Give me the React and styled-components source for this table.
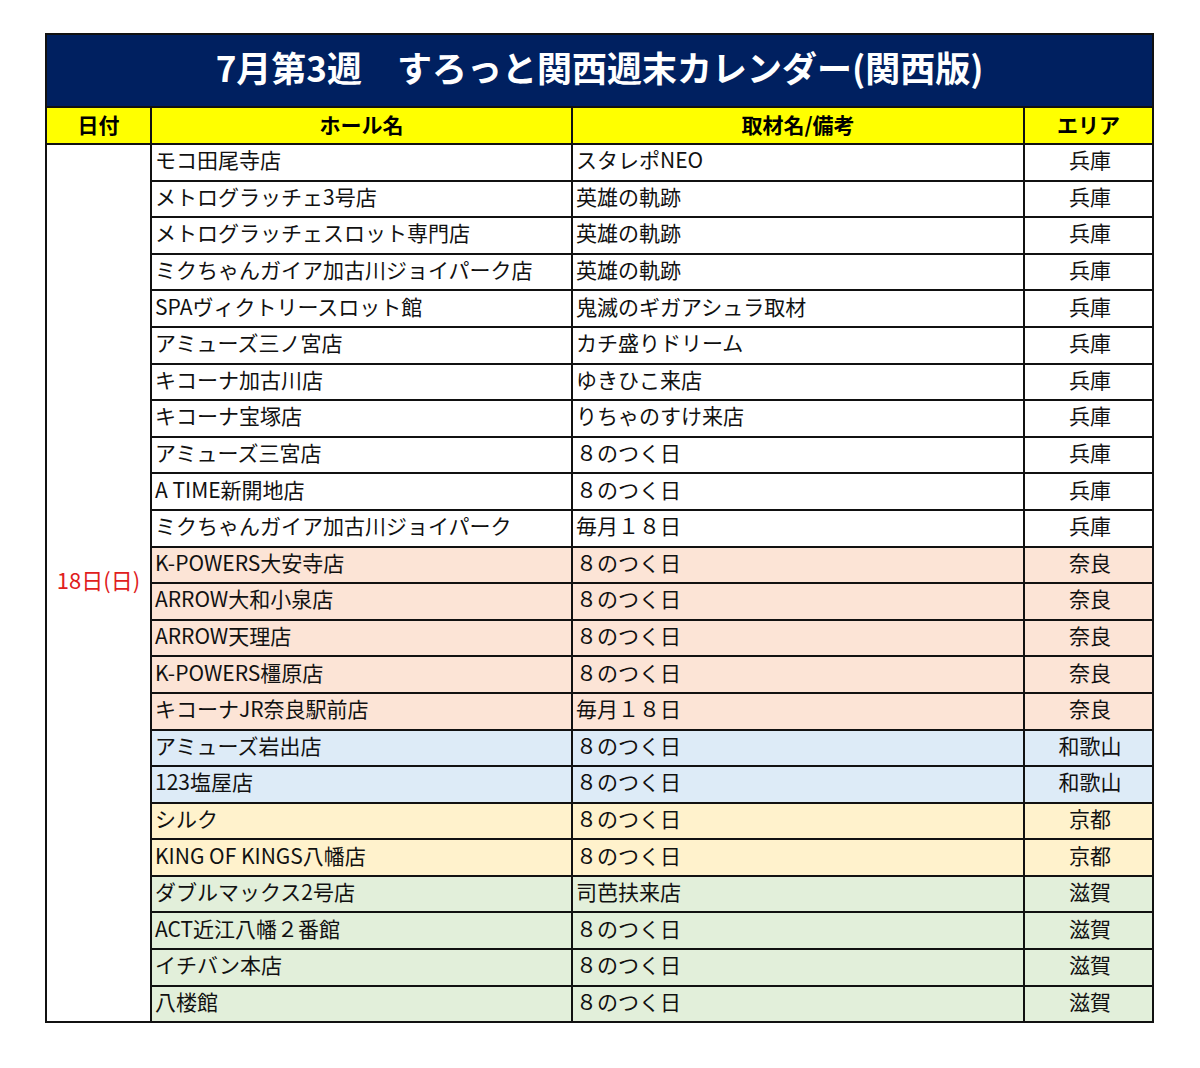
import React from 'react';
import styled, { createGlobalStyle } from 'styled-components';

const GlobalStyle = createGlobalStyle`
    body {
        margin: 0;
        background: #ffffff;
        font-family: "Noto Sans CJK JP", "Noto Sans", sans-serif;
    }
`;

const regionColors = {
    hyogo: '#ffffff',
    nara: '#fce4d6',
    wakayama: '#ddebf7',
    kyoto: '#fff2cc',
    shiga: '#e2efda',
};

const rows = [
    ['モコ田尾寺店', 'スタレポNEO', '兵庫', 'hyogo'],
    ['メトログラッチェ3号店', '英雄の軌跡', '兵庫', 'hyogo'],
    ['メトログラッチェスロット専門店', '英雄の軌跡', '兵庫', 'hyogo'],
    ['ミクちゃんガイア加古川ジョイパーク店', '英雄の軌跡', '兵庫', 'hyogo'],
    ['SPAヴィクトリースロット館', '鬼滅のギガアシュラ取材', '兵庫', 'hyogo'],
    ['アミューズ三ノ宮店', 'カチ盛りドリーム', '兵庫', 'hyogo'],
    ['キコーナ加古川店', 'ゆきひこ来店', '兵庫', 'hyogo'],
    ['キコーナ宝塚店', 'りちゃのすけ来店', '兵庫', 'hyogo'],
    ['アミューズ三宮店', '８のつく日', '兵庫', 'hyogo'],
    ['A TIME新開地店', '８のつく日', '兵庫', 'hyogo'],
    ['ミクちゃんガイア加古川ジョイパーク', '毎月１８日', '兵庫', 'hyogo'],
    ['K-POWERS大安寺店', '８のつく日', '奈良', 'nara'],
    ['ARROW大和小泉店', '８のつく日', '奈良', 'nara'],
    ['ARROW天理店', '８のつく日', '奈良', 'nara'],
    ['K-POWERS橿原店', '８のつく日', '奈良', 'nara'],
    ['キコーナJR奈良駅前店', '毎月１８日', '奈良', 'nara'],
    ['アミューズ岩出店', '８のつく日', '和歌山', 'wakayama'],
    ['123塩屋店', '８のつく日', '和歌山', 'wakayama'],
    ['シルク', '８のつく日', '京都', 'kyoto'],
    ['KING OF KINGS八幡店', '８のつく日', '京都', 'kyoto'],
    ['ダブルマックス2号店', '司芭扶来店', '滋賀', 'shiga'],
    ['ACT近江八幡２番館', '８のつく日', '滋賀', 'shiga'],
    ['イチバン本店', '８のつく日', '滋賀', 'shiga'],
    ['八楼館', '８のつく日', '滋賀', 'shiga'],
];

const Styled = {
    Page: styled.div`
        padding: 33px 0 0 45px;
        width: 1200px;
        height: 1068px;
        box-sizing: border-box;
        overflow: hidden;
    `,

    Table: styled.table`
        width: 1107px;
        border-collapse: collapse;
        table-layout: fixed;
        border: 2px solid #111;
    `,

    Row: styled.tr`
        height: ${({ h }) => h}px;
    `,

    TitleCell: styled.th`
        padding: 0 0 8px;
        background-color: #002060;
        color: #ffffff;
        font-size: 35px;
        line-height: 40px;
        font-weight: 700;
        text-align: center;
        border: 2px solid #111;
        white-space: pre;
    `,

    HeadCell: styled.th`
        padding: 0 0 4px;
        background-color: #ffff00;
        color: #000;
        font-size: 21px;
        line-height: 26px;
        font-weight: 700;
        text-align: center;
        border: 2px solid #111;
    `,

    DateCell: styled.td`
        background: #ffffff;
        color: #e0201c;
        font-size: 22px;
        line-height: 26px;
        text-align: center;
        vertical-align: middle;
        border: 2px solid #111;
        padding: 0 0 8px;
    `,

    Cell: styled.td`
        padding: 0 0 6px 3px;
        background-color: ${({ region }) => regionColors[region]};
        color: #111;
        font-size: 21px;
        line-height: 24px;
        text-align: ${({ center }) => (center ? 'center' : 'left')};
        border: 2px solid #111;
        white-space: nowrap;
        overflow: hidden;
    `,
};

function App() {
    return (
        <>
            <GlobalStyle />
            <Styled.Page>
                <Styled.Table>
                    <colgroup>
                        <col style={{ width: 105 }} />
                        <col style={{ width: 421 }} />
                        <col style={{ width: 452 }} />
                        <col style={{ width: 129 }} />
                    </colgroup>
                    <thead>
                        <Styled.Row h={73}>
                            <Styled.TitleCell colSpan={4}>
                                {'7月第3週　すろっと関西週末カレンダー(関西版)'}
                            </Styled.TitleCell>
                        </Styled.Row>
                        <Styled.Row h={37}>
                            <Styled.HeadCell>日付</Styled.HeadCell>
                            <Styled.HeadCell>ホール名</Styled.HeadCell>
                            <Styled.HeadCell>取材名/備考</Styled.HeadCell>
                            <Styled.HeadCell>エリア</Styled.HeadCell>
                        </Styled.Row>
                    </thead>
                    <tbody>
                        {rows.map(([hall, note, area, region], idx) => (
                            <Styled.Row h={36.6} key={idx}>
                                {idx === 0 && (
                                    <Styled.DateCell rowSpan={rows.length}>18日(日)</Styled.DateCell>
                                )}
                                <Styled.Cell region={region}>{hall}</Styled.Cell>
                                <Styled.Cell region={region}>{note}</Styled.Cell>
                                <Styled.Cell region={region} center>{area}</Styled.Cell>
                            </Styled.Row>
                        ))}
                    </tbody>
                </Styled.Table>
            </Styled.Page>
        </>
    );
}

export default App;
